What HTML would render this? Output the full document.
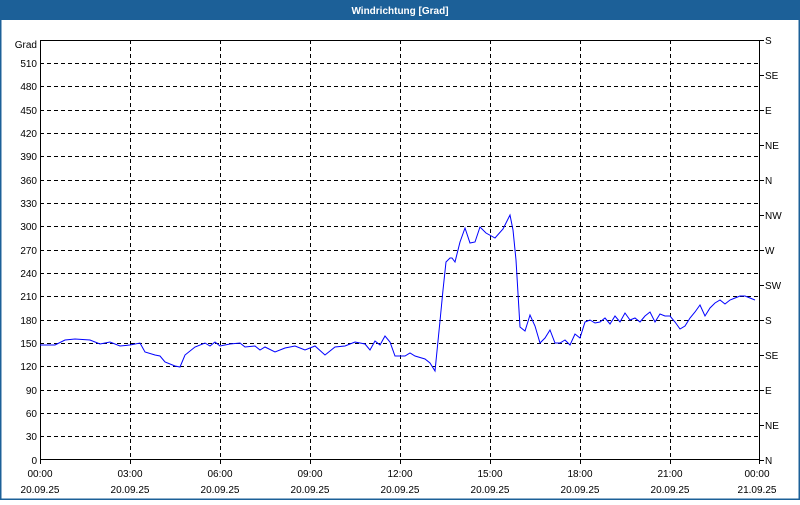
<!DOCTYPE html>
<html><head><meta charset="utf-8"><style>
html,body{margin:0;padding:0;background:#fff;}
body{width:800px;height:500px;overflow:hidden;}
svg text{font-family:"Liberation Sans",sans-serif;font-size:10px;fill:#000;}
</style></head><body>
<svg width="800" height="500" xmlns="http://www.w3.org/2000/svg">
<rect x="0" y="0" width="800" height="500" fill="#fff"/>
<rect x="0" y="0" width="800" height="20" fill="#1c6098"/>
<rect x="0.5" y="0.5" width="799" height="499" fill="none" stroke="#1c6098" stroke-width="2"/>
<text x="400" y="14" text-anchor="middle" style="fill:#fff;font-weight:bold;font-size:10px">Windrichtung [Grad]</text>
<g stroke="#000" stroke-width="1" stroke-dasharray="4,3" shape-rendering="crispEdges">
<line x1="40" x2="760" y1="63.5" y2="63.5"/><line x1="40" x2="760" y1="86.5" y2="86.5"/><line x1="40" x2="760" y1="110.5" y2="110.5"/><line x1="40" x2="760" y1="133.5" y2="133.5"/><line x1="40" x2="760" y1="156.5" y2="156.5"/><line x1="40" x2="760" y1="180.5" y2="180.5"/><line x1="40" x2="760" y1="203.5" y2="203.5"/><line x1="40" x2="760" y1="226.5" y2="226.5"/><line x1="40" x2="760" y1="250.5" y2="250.5"/><line x1="40" x2="760" y1="273.5" y2="273.5"/><line x1="40" x2="760" y1="296.5" y2="296.5"/><line x1="40" x2="760" y1="320.5" y2="320.5"/><line x1="40" x2="760" y1="343.5" y2="343.5"/><line x1="40" x2="760" y1="366.5" y2="366.5"/><line x1="40" x2="760" y1="390.5" y2="390.5"/><line x1="40" x2="760" y1="413.5" y2="413.5"/><line x1="40" x2="760" y1="436.5" y2="436.5"/>
<line x1="130.5" x2="130.5" y1="40" y2="460"/><line x1="220.5" x2="220.5" y1="40" y2="460"/><line x1="310.5" x2="310.5" y1="40" y2="460"/><line x1="400.5" x2="400.5" y1="40" y2="460"/><line x1="490.5" x2="490.5" y1="40" y2="460"/><line x1="580.5" x2="580.5" y1="40" y2="460"/><line x1="670.5" x2="670.5" y1="40" y2="460"/>
</g>
<rect x="40.5" y="40.5" width="719" height="419" fill="none" stroke="#000" stroke-width="1" shape-rendering="crispEdges"/>
<g stroke="#000" shape-rendering="crispEdges">
<line x1="130.5" x2="130.5" y1="460" y2="464"/><line x1="220.5" x2="220.5" y1="460" y2="464"/><line x1="310.5" x2="310.5" y1="460" y2="464"/><line x1="400.5" x2="400.5" y1="460" y2="464"/><line x1="490.5" x2="490.5" y1="460" y2="464"/><line x1="580.5" x2="580.5" y1="460" y2="464"/><line x1="670.5" x2="670.5" y1="460" y2="464"/><line x1="759.5" x2="759.5" y1="460" y2="464"/><line x1="40.5" x2="40.5" y1="460" y2="464"/>
<line x1="760" x2="764" y1="40.5" y2="40.5"/><line x1="760" x2="764" y1="75.5" y2="75.5"/><line x1="760" x2="764" y1="110.5" y2="110.5"/><line x1="760" x2="764" y1="145.5" y2="145.5"/><line x1="760" x2="764" y1="180.5" y2="180.5"/><line x1="760" x2="764" y1="215.5" y2="215.5"/><line x1="760" x2="764" y1="250.5" y2="250.5"/><line x1="760" x2="764" y1="285.5" y2="285.5"/><line x1="760" x2="764" y1="320.5" y2="320.5"/><line x1="760" x2="764" y1="355.5" y2="355.5"/><line x1="760" x2="764" y1="390.5" y2="390.5"/><line x1="760" x2="764" y1="425.5" y2="425.5"/><line x1="760" x2="764" y1="460.5" y2="460.5"/>
</g>
<g text-anchor="end">
<text x="37" y="48">Grad</text>
<text x="37" y="67">510</text><text x="37" y="90">480</text><text x="37" y="114">450</text><text x="37" y="137">420</text><text x="37" y="160">390</text><text x="37" y="184">360</text><text x="37" y="207">330</text><text x="37" y="230">300</text><text x="37" y="254">270</text><text x="37" y="277">240</text><text x="37" y="300">210</text><text x="37" y="324">180</text><text x="37" y="347">150</text><text x="37" y="370">120</text><text x="37" y="394">90</text><text x="37" y="417">60</text><text x="37" y="440">30</text><text x="37" y="464">0</text>
</g>
<g>
<text x="765" y="44">S</text><text x="765" y="79">SE</text><text x="765" y="114">E</text><text x="765" y="149">NE</text><text x="765" y="184">N</text><text x="765" y="219">NW</text><text x="765" y="254">W</text><text x="765" y="289">SW</text><text x="765" y="324">S</text><text x="765" y="359">SE</text><text x="765" y="394">E</text><text x="765" y="429">NE</text><text x="765" y="464">N</text>
</g>
<g text-anchor="middle">
<text x="40" y="477">00:00</text><text x="130" y="477">03:00</text><text x="220" y="477">06:00</text><text x="310" y="477">09:00</text><text x="400" y="477">12:00</text><text x="490" y="477">15:00</text><text x="580" y="477">18:00</text><text x="670" y="477">21:00</text><text x="757" y="477">00:00</text>
<text x="40" y="493">20.09.25</text><text x="130" y="493">20.09.25</text><text x="220" y="493">20.09.25</text><text x="310" y="493">20.09.25</text><text x="400" y="493">20.09.25</text><text x="490" y="493">20.09.25</text><text x="580" y="493">20.09.25</text><text x="670" y="493">20.09.25</text><text x="757" y="493">21.09.25</text>
</g>
<polyline fill="none" stroke="#0000ff" stroke-width="1" points="40,345 55,345 65,340 75,339 90,340 100,344 110,342 120,346 130,345 140,343 145,352 155,355 160,356 165,362 175,366 180,367 185,355 195,347 205,343 210,346 215,342 220,346 230,344 240,343 245,347 255,346 260,350 265,347 275,352 285,348 295,346 305,350 315,346 325,355 335,347 345,346 355,342 365,344 370,350 375,341 380,345 385,336 390,342 395,356 405,356 410,353 415,356 425,359 430,363 435,371 440,321 443,290 446,262 450,258 452,258 455,262 460,242 465,228 470,243 475,242 480,227 486,233 495,238 503,229 510,215 513,230 516,260 520,327 525,331 530,315 535,326 540,343 545,338 550,330 555,343 560,343 565,340 570,345 575,334 580,338 585,322 590,320 595,323 600,322 605,318 610,324 615,316 620,322 625,313 630,320 635,318 640,322 645,316 650,312 655,322 660,314 665,316 670,316 675,322 680,329 685,326 690,318 695,312 700,305 705,316 710,308 715,303 720,300 725,304 730,300 735,298 740,296 745,296 750,298 755,300"/>
</svg>
</body></html>
